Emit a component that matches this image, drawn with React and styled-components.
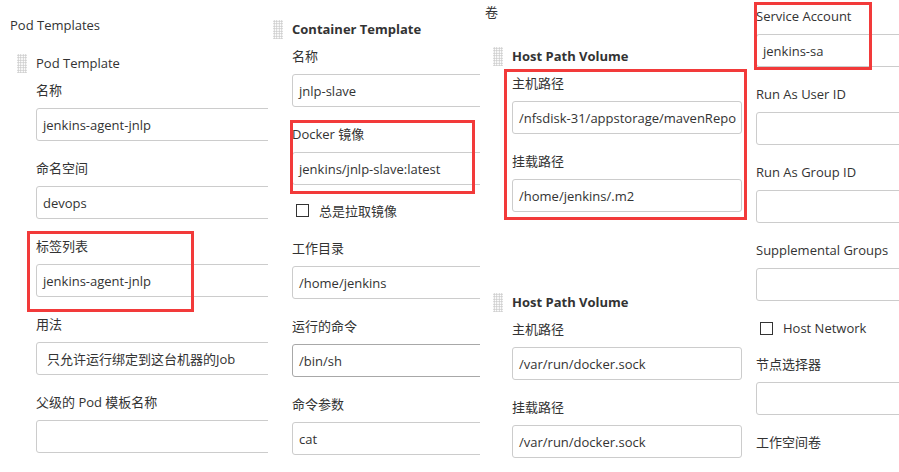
import React from "react";
import styled, { createGlobalStyle } from "styled-components";

const Global = createGlobalStyle`
  html, body { margin: 0; padding: 0; background: #fff; }
  body {
    font-family: "Open Sans", "Noto Sans CJK SC", sans-serif;
    font-size: 13px;
    color: #333;
  }
`;

const Page = styled.div`
  display: flex;
  width: 899px;
  height: 472px;
  overflow: hidden;
  background: #fff;
`;

const Column = styled.div`
  position: relative;
  flex: 0 0 ${(p) => p.$w}px;
  overflow: hidden;
  padding-top: ${(p) => p.$pt || 0}px;
  padding-left: ${(p) => p.$pl || 0}px;
  box-sizing: border-box;
`;

const Heading = styled.div`
  line-height: 20px;
  padding-left: ${(p) => p.$pl || 0}px;
  margin-bottom: ${(p) => p.$mb || 0}px;
`;

const SectionHead = styled.div`
  display: flex;
  align-items: center;
  gap: 9px;
  height: 20px;
  margin-left: ${(p) => p.$ml || 0}px;
  margin-bottom: 7px;
  margin-top: ${(p) => p.$mt || 0}px;
`;

const Grip = styled.span`
  width: 10px;
  height: 19px;
  background-image: radial-gradient(circle, #cacaca 0.8px, transparent 1.1px);
  background-size: 2.5px 2.5px;
`;

const Title = styled.span`
  font-weight: ${(p) => (p.$bold ? 700 : 400)};
  font-size: 13px;
`;

const Body = styled.div`
  padding-left: ${(p) => p.$pl || 0}px;
`;

const Group = styled.div`
  position: relative;
`;

const Field = styled.div`
  position: relative;
  display: flex;
  flex-direction: column;
  margin-bottom: ${(p) => (p.$mb != null ? p.$mb : 17)}px;
`;

const Label = styled.label`
  line-height: 20px;
  margin-bottom: 8px;
  white-space: nowrap;
`;

const Input = styled.div`
  box-sizing: border-box;
  height: 33px;
  width: ${(p) => p.$w || 400}px;
  border: 1px solid ${(p) => (p.$dark ? "#a8a8a8" : "#cccccc")};
  border-radius: 3px;
  background: #fff;
  display: flex;
  align-items: center;
  padding-left: ${(p) => p.$pad || 6}px;
  white-space: nowrap;
  color: #333;
`;

const CheckRow = styled.div`
  display: flex;
  align-items: center;
  gap: 10px;
  height: 20px;
  margin-left: 4px;
  margin-bottom: ${(p) => p.$mb || 17}px;
`;

const Box = styled.span`
  box-sizing: border-box;
  width: 13px;
  height: 13px;
  border: 1px solid #333;
  background: #fff;
`;

const Mark = styled.div`
  position: absolute;
  top: ${(p) => p.$t}px;
  left: ${(p) => p.$l}px;
  width: ${(p) => p.$w}px;
  height: ${(p) => p.$h}px;
  border: 3px solid #f23a3a;
  box-sizing: border-box;
  pointer-events: none;
`;

export default function App() {
  return (
    <Page>
      <Global />
      <Column $w={268} $pt={15}>
        <Heading $pl={10} $mb={18}>Pod Templates</Heading>
        <SectionHead $ml={17}>
          <Grip />
          <Title>Pod Template</Title>
        </SectionHead>
        <Body $pl={36}>
          <Field>
            <Label>名称</Label>
            <Input $w={260}>jenkins-agent-jnlp</Input>
          </Field>
          <Field>
            <Label>命名空间</Label>
            <Input $w={260}>devops</Input>
          </Field>
          <Field>
            <Label>标签列表</Label>
            <Input $w={260}>jenkins-agent-jnlp</Input>
            <Mark $t={-5} $l={-9} $w={167} $h={81} />
          </Field>
          <Field>
            <Label>用法</Label>
            <Input $w={260} $pad={10}>只允许运行绑定到这台机器的Job</Input>
          </Field>
          <Field>
            <Label>父级的 Pod 模板名称</Label>
            <Input $w={260} />
          </Field>
        </Body>
      </Column>

      <Column $w={212} $pt={19}>
        <SectionHead $ml={5}>
          <Grip />
          <Title $bold>Container Template</Title>
        </SectionHead>
        <Body $pl={24}>
          <Field>
            <Label>名称</Label>
            <Input $w={300}>jnlp-slave</Input>
          </Field>
          <Field $mb={15}>
            <Label>Docker 镜像</Label>
            <Input $w={300}>jenkins/jnlp-slave:latest</Input>
            <Mark $t={-4} $l={-2} $w={185} $h={74} />
          </Field>
          <CheckRow $mb={18}>
            <Box />
            <span>总是拉取镜像</span>
          </CheckRow>
          <Field>
            <Label>工作目录</Label>
            <Input $w={300}>/home/jenkins</Input>
          </Field>
          <Field>
            <Label>运行的命令</Label>
            <Input $w={300} $dark>/bin/sh</Input>
          </Field>
          <Field>
            <Label>命令参数</Label>
            <Input $w={300}>cat</Input>
          </Field>
        </Body>
      </Column>

      <Column $w={270} $pt={2}>
        <Heading $pl={5} $mb={24}>卷</Heading>
        <SectionHead $ml={13}>
          <Grip />
          <Title $bold>Host Path Volume</Title>
        </SectionHead>
        <Body $pl={32}>
          <Group>
            <Field>
              <Label>主机路径</Label>
              <Input $w={230}>/nfsdisk-31/appstorage/mavenRepo</Input>
            </Field>
            <Field $mb={0}>
              <Label>挂载路径</Label>
              <Input $w={230}>/home/jenkins/.m2</Input>
            </Field>
            <Mark $t={-4} $l={-8} $w={243} $h={151} />
          </Group>
        </Body>
        <SectionHead $ml={13} $mt={80}>
          <Grip />
          <Title $bold>Host Path Volume</Title>
        </SectionHead>
        <Body $pl={32}>
          <Field>
            <Label>主机路径</Label>
            <Input $w={230}>/var/run/docker.sock</Input>
          </Field>
          <Field>
            <Label>挂载路径</Label>
            <Input $w={230}>/var/run/docker.sock</Input>
          </Field>
        </Body>
      </Column>

      <Column $w={149} $pt={6} $pl={6}>
        <Field>
          <Label>Service Account</Label>
          <Input $w={200}>jenkins-sa</Input>
          <Mark $t={-4} $l={-2} $w={118} $h={68} />
        </Field>
        <Field>
          <Label>Run As User ID</Label>
          <Input $w={200} />
        </Field>
        <Field>
          <Label>Run As Group ID</Label>
          <Input $w={200} />
        </Field>
        <Field $mb={17}>
          <Label>Supplemental Groups</Label>
          <Input $w={200} />
        </Field>
        <CheckRow $mb={16}>
          <Box />
          <span>Host Network</span>
        </CheckRow>
        <Field>
          <Label>节点选择器</Label>
          <Input $w={200} />
        </Field>
        <Field>
          <Label>工作空间卷</Label>
        </Field>
      </Column>
    </Page>
  );
}
